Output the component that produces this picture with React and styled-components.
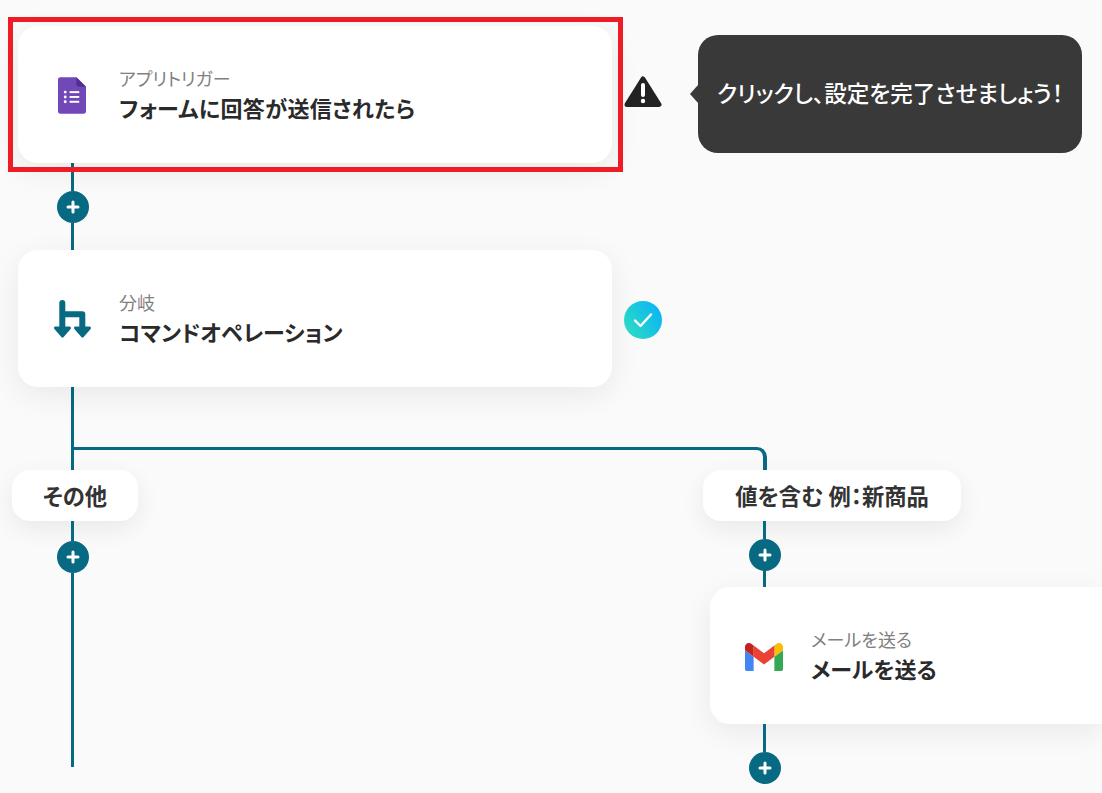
import React from "react";
import styled, { createGlobalStyle } from "styled-components";

const TEAL = "#086a82";
const FONT = `"Noto Sans CJK JP", "Noto Sans", sans-serif`;

const Global = createGlobalStyle`
  html, body { margin: 0; padding: 0; background: #fafafa; overflow: hidden; }
  body { font-family: ${FONT}; font-feature-settings: "palt"; }
`;

const Canvas = styled.div`
  width: 1102px;
  height: 793px;
  box-sizing: border-box;
  overflow: hidden;
  padding: 26px 0 0 18px;
  display: flex;
  flex-direction: column;
  align-items: flex-start;
  background: #fafafa;
`;

const NodeRow = styled.div`
  position: relative;
  display: flex;
  align-items: center;
`;

const Stem = styled.div`
  display: flex;
  flex-direction: column;
  align-items: flex-start;
  margin-left: ${(p) => p.$indent}px;
`;

const Wire = styled.div`
  width: 3px;
  height: ${(p) => p.$h}px;
  margin-left: 14px;
  background: ${TEAL};
`;

const Plus = styled.div`
  width: 32px;
  height: 32px;
  border-radius: 50%;
  background: ${TEAL};
  display: flex;
  align-items: center;
  justify-content: center;
`;

const Card = styled.div`
  width: ${(p) => p.$w}px;
  height: 137px;
  margin-left: ${(p) => p.$indent || 0}px;
  flex: none;
  background: #fff;
  border-radius: ${(p) => (p.$open ? "20px 0 0 20px" : "20px")};
  box-shadow: 0 8px 30px rgba(0, 0, 0, 0.07);
  display: flex;
  align-items: center;
  padding-left: 34px;
  box-sizing: border-box;
`;

const IconSlot = styled.div`
  width: 42px;
  height: 42px;
  display: flex;
  align-items: center;
  justify-content: center;
  flex: none;
  margin-right: 25px;
`;

const CardText = styled.div`
  display: flex;
  flex-direction: column;
  gap: 3px;
`;

const Sub = styled.div`
  font-size: 18px;
  line-height: 22px;
  color: #808080;
  white-space: nowrap;
`;

const Title = styled.div`
  font-size: 22px;
  line-height: 30px;
  font-weight: 700;
  letter-spacing: ${(p) => p.$track || 0}px;
  color: #2a2a2a;
  white-space: nowrap;
`;

const Highlight = styled.div`
  position: absolute;
  left: -10px;
  top: -9px;
  width: 615px;
  height: 155px;
  box-sizing: border-box;
  border: 5px solid #ee1c25;
  pointer-events: none;
`;

const Branches = styled.div`
  position: relative;
  display: flex;
  margin-left: -6px;
`;

const Elbow = styled.div`
  position: absolute;
  left: 60px;
  top: -23px;
  width: 695px;
  height: 24px;
  box-sizing: border-box;
  border-top: 3px solid ${TEAL};
  border-right: 4px solid ${TEAL};
  border-top-right-radius: 10px;
`;

const Branch = styled.div`
  position: relative;
  width: ${(p) => p.$w}px;
  display: flex;
  flex-direction: column;
  align-items: flex-start;
`;

const Pill = styled.div`
  width: ${(p) => p.$w}px;
  height: 51px;
  box-sizing: border-box;
  padding-bottom: 2px;
  border-radius: 18px;
  background: #fff;
  box-shadow: 0 8px 24px rgba(0, 0, 0, 0.07);
  display: flex;
  align-items: center;
  justify-content: center;
  font-size: 22.3px;
  font-weight: 600;
  color: #333;
  white-space: nowrap;
`;

const Tooltip = styled.div`
  position: relative;
  margin: 0 0 1px 36px;
  width: 384px;
  height: 118px;
  box-sizing: border-box;
  padding-bottom: 3px;
  border-radius: 20px;
  background: #393939;
  color: #fff;
  font-size: 22.6px;
  font-weight: 500;
  display: flex;
  align-items: center;
  justify-content: center;
  white-space: nowrap;
  &::before {
    content: "";
    position: absolute;
    left: -8px;
    top: 50%;
    margin-top: -9px;
    border-top: 9px solid transparent;
    border-bottom: 9px solid transparent;
    border-right: 8px solid #393939;
  }
`;

const Status = styled.div`
  margin-left: 12px;
  margin-top: ${(p) => p.$top || 0}px;
  margin-bottom: ${(p) => p.$bottom || 0}px;
  width: 38px;
  height: 38px;
  flex: none;
  display: flex;
  align-items: center;
  justify-content: center;
`;

const CheckDisc = styled(Status)`
  border-radius: 50%;
  background: linear-gradient(60deg, #2fe0bd 0%, #08b0fb 100%);
`;

const FormsSvg = styled.svg`
  margin: 2px 2px 0 0;
`;

const GmailSvg = styled.svg`
  margin: 3px 2px 0 0;
`;

const PlusIcon = () => (
  <svg width="14" height="14" viewBox="0 0 14 14">
    <path d="M7 2v10M2 7h10" stroke="#fff" strokeWidth="3" strokeLinecap="round" />
  </svg>
);

const FormsIcon = () => (
  <FormsSvg width="28" height="37" viewBox="0 0 29 38">
    <path d="M2.5 0H19l10 10v25.5a2.5 2.5 0 0 1-2.5 2.5h-24A2.5 2.5 0 0 1 0 35.500V2.500A2.500 2.500 0 0 1 2.500 0z" fill="#7248b9" />
    <path d="M19 0l10 10H21.500A2.500 2.500 0 0 1 19 7.500z" fill="#4f2f91" />
    <g fill="#fff">
      <circle cx="7.500" cy="15.500" r="1.500" />
      <circle cx="7.500" cy="20.500" r="1.500" />
      <circle cx="7.500" cy="25.500" r="1.500" />
      <rect x="12" y="14.500" width="10" height="2" />
      <rect x="12" y="19.500" width="10" height="2" />
      <rect x="12" y="24.500" width="10" height="2" />
    </g>
  </FormsSvg>
);

const BranchIcon = () => (
  <svg width="40" height="40" viewBox="0 0 40 40">
    <path d="M9.300 4v26M9.300 15.200H29.300V30" fill="none" stroke={TEAL} strokeWidth="6" strokeLinecap="round" strokeLinejoin="round" />
    <path d="M2.500 29h14L9.500 37z" fill={TEAL} stroke={TEAL} strokeWidth="3" strokeLinejoin="round" />
    <path d="M22.500 29h14L29.500 37z" fill={TEAL} stroke={TEAL} strokeWidth="3" strokeLinejoin="round" />
  </svg>
);

const GmailIcon = () => (
  <GmailSvg width="38" height="28.500" viewBox="52 42 88 66">
    <path fill="#4285f4" d="M58 108h14V74L52 59v43c0 3.320 2.690 6 6 6" />
    <path fill="#34a853" d="M120 108h14c3.320 0 6-2.690 6-6V59l-20 15" />
    <path fill="#fbbc04" d="M120 48v26l20-15v-8c0-7.420-8.470-11.650-14.400-7.200" />
    <path fill="#ea4335" d="M72 74V48l24 18 24-18v26L96 92" />
    <path fill="#c5221f" d="M52 51v8l20 15V48l-5.600-4.200c-5.940-4.450-14.400-.220-14.400 7.200" />
  </GmailSvg>
);

const WarnIcon = () => (
  <svg width="38" height="34" viewBox="0 0 38 34">
    <path d="M19 4L35 29.500H3z" fill="#222" stroke="#222" strokeWidth="5" strokeLinejoin="round" />
    <path d="M19 10v10" stroke="#fff" strokeWidth="4" strokeLinecap="round" />
    <circle cx="19" cy="26" r="2.200" fill="#fff" />
  </svg>
);

const CheckIcon = () => (
  <svg width="20" height="16" viewBox="0 0 20 16">
    <path d="M2 8.500l5.500 5.500L18 2.500" fill="none" stroke="#fff" strokeWidth="2.400" strokeLinecap="round" strokeLinejoin="round" />
  </svg>
);

const FlowCard = ({ w, indent, open, icon, sub, title, track }) => (
  <Card $w={w} $indent={indent} $open={open}>
    <IconSlot>{icon}</IconSlot>
    <CardText>
      <Sub>{sub}</Sub>
      <Title $track={track}>{title}</Title>
    </CardText>
  </Card>
);

const PlusButton = () => (
  <Plus>
    <PlusIcon />
  </Plus>
);

export default function App() {
  return (
    <Canvas>
      <Global />
      <NodeRow>
        <FlowCard w={594} track={0.35} icon={<FormsIcon />} sub="アプリトリガー" title="フォームに回答が送信されたら" />
        <Highlight />
        <Status $bottom={6}><WarnIcon /></Status>
        <Tooltip>クリックし、設定を完了させましょう！</Tooltip>
      </NodeRow>
      <Stem $indent={39}>
        <Wire $h={28} />
        <PlusButton />
        <Wire $h={27} />
      </Stem>
      <NodeRow>
        <FlowCard w={594} icon={<BranchIcon />} sub="分岐" title="コマンドオペレーション" />
        <CheckDisc $top={3}><CheckIcon /></CheckDisc>
      </NodeRow>
      <Stem $indent={39}>
        <Wire $h={83} />
      </Stem>
      <Branches>
        <Elbow />
        <Branch $w={691}>
          <Pill $w={126}>その他</Pill>
          <Stem $indent={45}>
            <Wire $h={20} />
            <PlusButton />
            <Wire $h={194} />
          </Stem>
        </Branch>
        <Branch $w={399}>
          <Pill $w={258}>値を含む 例：新商品</Pill>
          <Stem $indent={46}>
            <Wire $h={18} />
            <PlusButton />
            <Wire $h={16} />
          </Stem>
          <FlowCard w={392} indent={7} open icon={<GmailIcon />} sub="メールを送る" title="メールを送る" />
          <Stem $indent={46}>
            <Wire $h={28} />
            <PlusButton />
          </Stem>
        </Branch>
      </Branches>
    </Canvas>
  );
}
